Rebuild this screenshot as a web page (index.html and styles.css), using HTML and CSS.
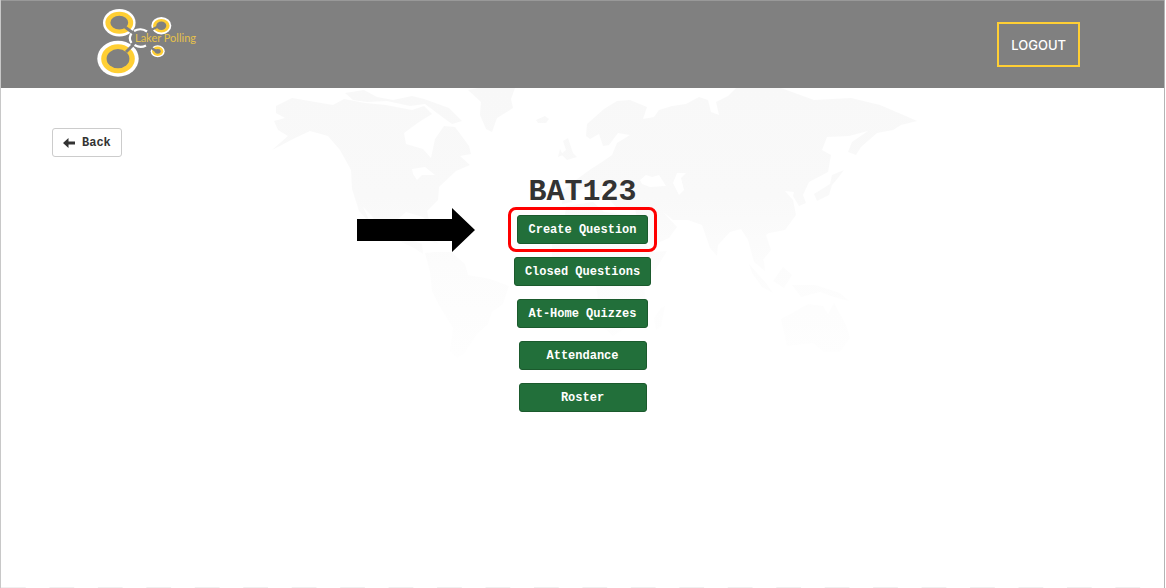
FILE: index.html
```html
<!DOCTYPE html>
<html lang="en">
<head>
<meta charset="utf-8">
<meta name="viewport" content="width=device-width, initial-scale=1">
<title>Laker Polling</title>
<link rel="stylesheet" href="styles.css">
</head>
<body>
<div class="page">
  <header class="topbar">
    <a class="brand" href="#" aria-label="Laker Polling home">
      <svg class="brand-logo" viewBox="95 9 110 71" width="110" height="71" role="img" aria-label="Laker Polling">
        <g fill="#fff">
          <ellipse cx="119.300" cy="22.700" rx="16.300" ry="13.800"/>
          <ellipse cx="118" cy="58.700" rx="20.700" ry="18"/>
          <ellipse cx="161.300" cy="25.700" rx="10" ry="8.700"/>
          <ellipse cx="157.700" cy="51.300" rx="7" ry="6"/>
        </g>
        <g fill="#ffcf34">
          <ellipse cx="119.300" cy="22.700" rx="13.900" ry="11"/>
          <ellipse cx="118" cy="58.700" rx="16.800" ry="14.500"/>
          <ellipse cx="161.300" cy="25.700" rx="8.300" ry="6.800"/>
          <ellipse cx="157.700" cy="51.300" rx="5.600" ry="4.700"/>
        </g>
        <g fill="#808080">
          <ellipse cx="119.300" cy="22.700" rx="8.900" ry="6.900"/>
          <ellipse cx="118" cy="58.700" rx="11.400" ry="9.600"/>
          <ellipse cx="161.300" cy="25.700" rx="5" ry="4.200"/>
          <ellipse cx="157.700" cy="51.300" rx="3" ry="2.400"/>
        </g>
        <g fill="none">
          <path d="M125 27L133 33M126 52L134 44" stroke="#808080" stroke-width="3"/>
          <path d="M151 30L159 26M150 47L156 51" stroke="#808080" stroke-width="2.500"/>
          <path d="M134 31A10.500 9 0 0 1 147 31.500M131.500 33.500A10.500 9 0 0 0 131.500 43M134.500 45A10.500 9 0 0 0 146 45.500" stroke="#fff" stroke-width="2.200"/>
        </g>
        <text class="brand-name" x="135" y="42">Laker Polling</text>
      </svg>
    </a>
    <button class="logout" type="button">LOGOUT</button>
  </header>

  <main class="content">
    <svg class="map" viewBox="0 0 660 270" width="660" height="270" aria-hidden="true">
      <defs>
        <linearGradient id="fade" gradientUnits="userSpaceOnUse" x1="0" y1="0" x2="0" y2="270">
          <stop offset="0" stop-color="#f8f8f8"/>
          <stop offset=".4" stop-color="#f9f9f9"/>
          <stop offset=".65" stop-color="#fcfcfc"/>
          <stop offset="1" stop-color="#fefefe"/>
        </linearGradient>
      </defs>
      <g fill="url(#fade)">
        <path d="M15 18L31 10L72 17L83 11L104 15L125 17L151 22L163 18L171 26L158 34L143 45L145 56L162 61L170 70L174 51L183 38L194 39L200 47L208 58L210 66L199 68L209 77L195 83L178 99L177 112L166 123L169 136L162 129L145 124L137 131L139 145L149 146L154 143L153 153L161 156L162 166L153 160L136 152L119 144L111 128L102 119L110 136L98 123L91 101L90 82L79 62L67 48L49 43L34 50L11 62L27 48L17 42L13 33L24 30L15 25Z"/>
        <path d="M84 5L103 2L116 9L132 12L151 8L163 11L188 20L201 33L191 36L180 28L164 16L149 18L126 13L106 14L92 12Z"/>
        <path d="M207 2L217 0H254L250 11L252 20L236 30L231 44L225 41L219 27L220 14Z"/>
        <path d="M275 32L284 28L288 31L285 35L277 35Z"/>
        <path d="M164 165L174 164L190 164L204 176L207 187L229 191L248 198L242 216L231 224L227 236L216 246L203 266L196 270L189 263L192 240L179 219L171 203L169 184Z"/>
        <path d="M155 146L168 148L178 156L165 152Z"/>
        <path d="M302 53L307 50L312 65L316 69L306 72L300 66L305 62ZM299 61L302 67L297 69Z"/>
        <path d="M325 48L326 36L343 21L356 13L369 12L386 19L382 31L393 29L398 22L411 18L425 16L438 9L447 12L450 24L458 27L455 14L467 8L475 0H520L553 12L590 10L619 17L647 29L656 33L640 37L632 42L616 45L600 59L595 67L587 64L591 54L607 43L588 48L566 49L561 62L570 67L567 84L548 94L542 107L545 115L538 118L532 108L533 104L524 103L532 112L535 127L524 142L508 145L505 147L510 162L502 172L493 167L491 162L503 173L504 183L493 174L487 152L480 141L469 144L457 157L456 168L449 160L441 137L427 132L412 132L402 124L416 139L408 150L390 158L382 146L376 130L374 121L355 119L348 111L352 105L342 98L340 111L331 99L314 103L311 114L301 116L302 102L319 89L330 81L341 74L351 67L356 55L369 47L357 45L348 57L342 58L338 46L329 51Z"/>
        <path d="M305 118L332 114L343 124L366 127L383 154L393 164L406 163L395 181L383 192L384 211L373 220L365 240L352 248L343 240L337 211L334 192L306 187L291 172L291 150L304 127Z"/>
        <path d="M556 113L553 106L569 96L571 87L583 82L577 90L571 97L568 107Z"/>
        <path d="M404 218L400 239L395 242L393 230L400 220Z"/>
        <path d="M488 176L505 195L512 205L501 199L491 185ZM512 193L522 179L531 187L523 200ZM531 197L554 197L579 205L588 213L573 209L559 204L540 209Z"/>
        <path d="M520 231L533 224L547 216L562 218L567 226L573 215L585 237L589 250L579 264L563 264L552 255L526 258Z"/>
      </g>
      <g fill="#fff">
        <path d="M379 92L385 87L391 89L398 87L405 98L389 99L381 96Z"/>
        <path d="M416 85L425 85L420 90L423 102L418 107L412 95Z"/>
        <path d="M151 81L164 79L174 87L161 87L156 92L152 86Z"/>
      </g>
    </svg>

    <button class="btn btn-back" type="button">
      <svg viewBox="0 0 12 10" width="12" height="10" aria-hidden="true"><path d="M0 5L5.500 0V3.500H12V6.500H5.500V10Z" fill="#333"/></svg>
      Back
    </button>

    <section class="course">
      <h1 class="course-title">BAT123</h1>
      <div class="highlight">
        <svg class="pointer" viewBox="0 0 118 44" width="118" height="44" aria-hidden="true"><path d="M0 11H95V0L118 22L95 44V33H0Z"/></svg>
        <button class="btn btn-main" type="button">Create Question</button>
      </div>
      <button class="btn btn-main" type="button">Closed Questions</button>
      <button class="btn btn-main" type="button">At-Home Quizzes</button>
      <button class="btn btn-main" type="button">Attendance</button>
      <button class="btn btn-main" type="button">Roster</button>
    </section>
  </main>
  <div class="page-end"></div>
</div>
</body>
</html>
```
FILE: styles.css
```css
* { box-sizing: border-box; }

body {
  margin: 0;
  background: #fff;
  color: #333;
  font-family: "Liberation Mono", "Courier New", monospace;
}

.page {
  display: flex;
  flex-direction: column;
  min-height: 100vh;
  margin-right: 1px;
  border-left: 1px solid #c8c8c8;
  border-right: 1px solid #b4b4b4;
}

.topbar {
  display: flex;
  align-items: center;
  justify-content: space-between;
  height: 88px;
  padding: 0 84px 0 94px;
  background: #808080;
  border-top: 1px solid #999;
}

.brand-logo {
  display: block;
  overflow: visible;
}

.brand-name {
  fill: #e5c04b;
  font-family: Lato, sans-serif;
  font-size: 11px;
}

.logout {
  height: 45px;
  padding: 0 12px;
  border: 2px solid #ffcf34;
  background: transparent;
  color: #fff;
  font-family: Inter, sans-serif;
  font-size: 13px;
  font-weight: 500;
}

.content {
  position: relative;
  flex: 1;
  padding: 40px 51px;
}

.map {
  position: absolute;
  top: 0;
  left: 50%;
  margin-left: -322px;
}

.btn {
  height: 29px;
  padding: 0 10px;
  border: 1px solid;
  border-radius: 3px;
  font-family: inherit;
  font-size: 12px;
  font-weight: 700;
  line-height: 18px;
}

.btn-back {
  position: relative;
  display: flex;
  align-items: center;
  gap: 7px;
  border-color: #ccc;
  background: #fff;
  color: #333;
}

.course {
  position: relative;
  display: flex;
  flex-direction: column;
  align-items: center;
  gap: 13px;
  padding-top: 19px;
}

.course-title {
  margin: 0 0 -6px;
  font-size: 30px;
  line-height: 32px;
}

.btn-main {
  min-width: 128px;
  border-color: #1b5a2d;
  background: #226f3a;
  color: #fff;
}

.highlight {
  position: relative;
  display: flex;
}

.highlight::after {
  content: "";
  position: absolute;
  inset: -8px -9px;
  border: 3px solid #f00;
  border-radius: 8px;
  pointer-events: none;
}

.pointer {
  position: absolute;
  top: -7px;
  right: 173px;
}

.page-end {
  height: 1px;
  background: linear-gradient(90deg, #f0f0f0 50%, #fff 50%) 0 0 / calc(100% / 24) 1px repeat-x;
}
```
